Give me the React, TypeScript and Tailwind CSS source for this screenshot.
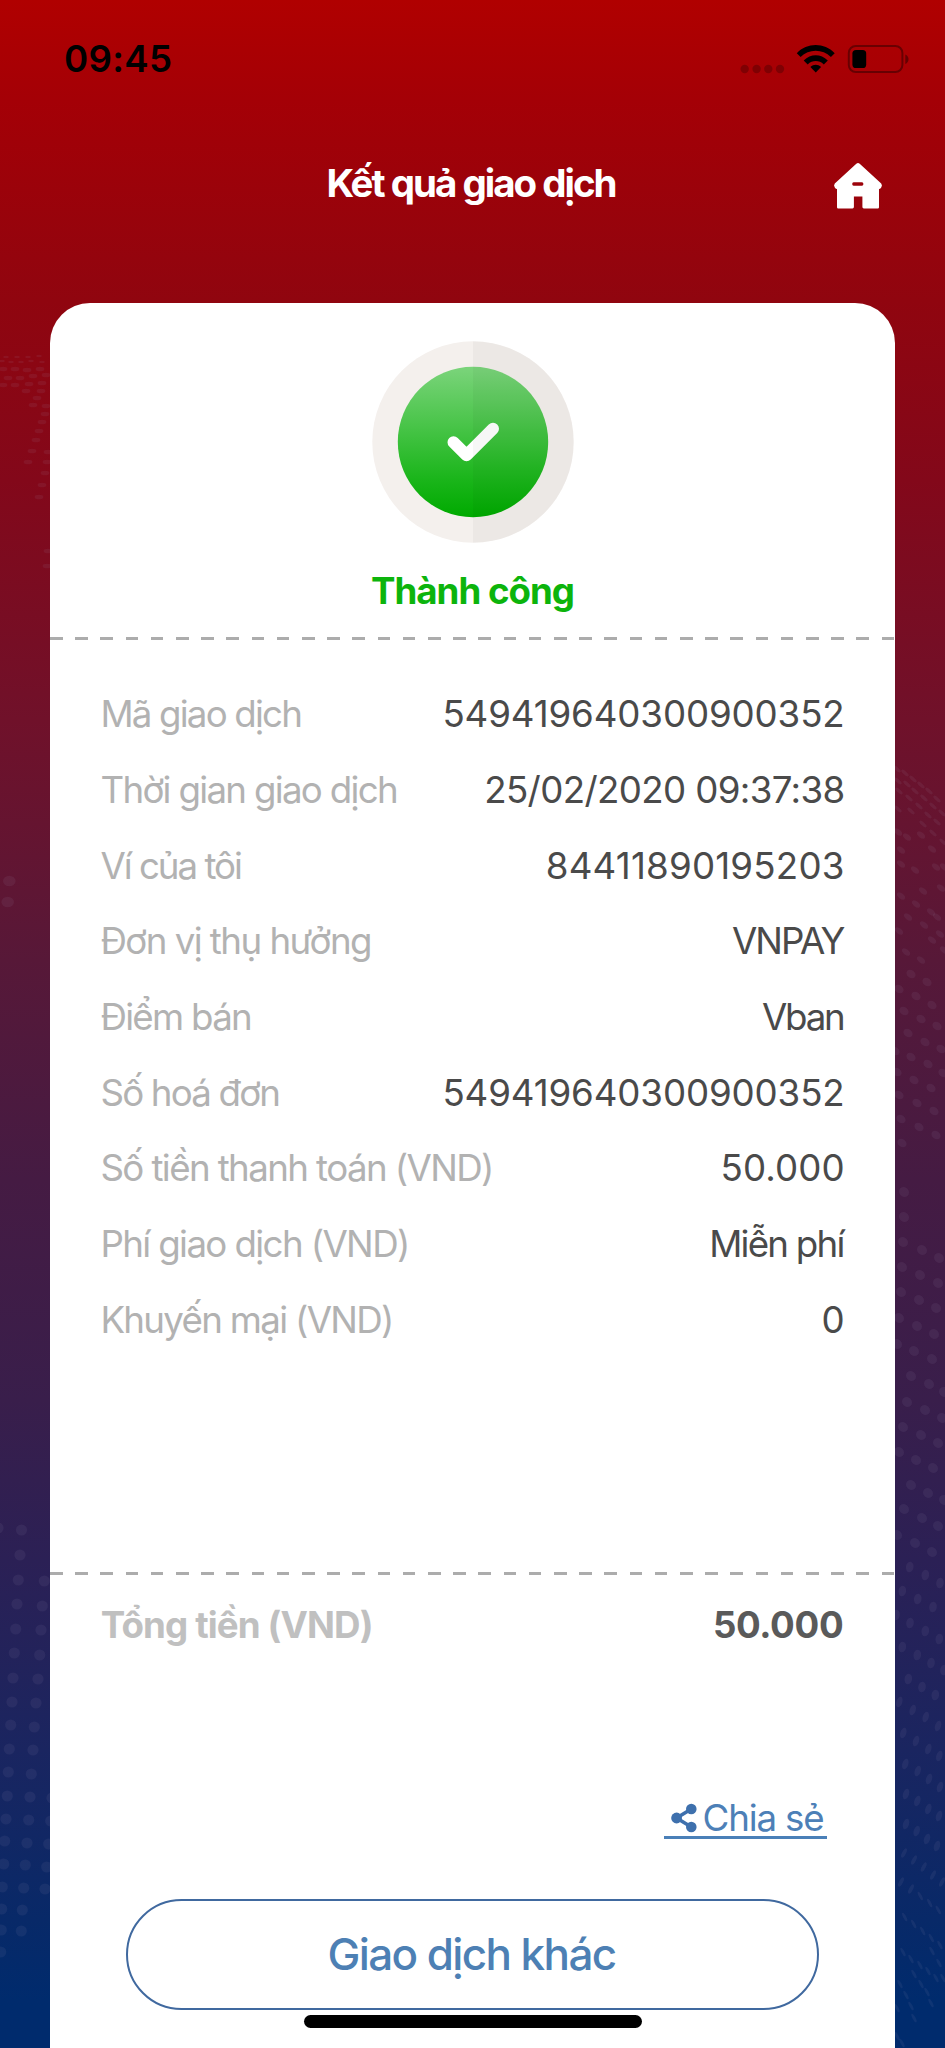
type Detail = {
  label: string;
  value: string;
  labelClass: string;
  valueClass: string;
};

const details: Detail[] = [
  { label: "Mã giao dịch", value: "549419640300900352", labelClass: "tracking-[-1.8px]", valueClass: "tracking-[-0.12px]" },
  { label: "Thời gian giao dịch", value: "25/02/2020 09:37:38", labelClass: "tracking-[-1.69px]", valueClass: "tracking-[-0.64px]" },
  { label: "Ví của tôi", value: "84411890195203", labelClass: "tracking-[-2px]", valueClass: "tracking-[0.2px]" },
  { label: "Đơn vị thụ hưởng", value: "VNPAY", labelClass: "tracking-[-1.53px]", valueClass: "mr-px tracking-[-1.9px]" },
  { label: "Điểm bán", value: "Vban", labelClass: "tracking-[-1.7px]", valueClass: "mr-px tracking-[-2.2px]" },
  { label: "Số hoá đơn", value: "549419640300900352", labelClass: "tracking-[-1.8px]", valueClass: "tracking-[-0.12px]" },
  { label: "Số tiền thanh toán (VND)", value: "50.000", labelClass: "tracking-[-1.6px]", valueClass: "tracking-[0.07px]" },
  { label: "Phí giao dịch (VND)", value: "Miễn phí", labelClass: "tracking-[-1.62px]", valueClass: "mr-px tracking-[-1.75px]" },
  { label: "Khuyến mại (VND)", value: "0", labelClass: "tracking-[-1.7px]", valueClass: "tracking-normal" },
];

// Background dots: [x, y] centres grouped by the size and tilt of the dot.
const dotGroups: { rx: number; ry: number; rot: number; pts: number[][] }[] = [
  {
    rx: 5.6, ry: 5.6, rot: 0,
    pts: [
      [-2, 1528], [21.5, 1530], [20, 1555], [18.3, 1580], [17, 1604], [15.7, 1629], [14.3, 1653], [13, 1678], [12, 1702],
      [10.7, 1725], [9.3, 1749], [8.3, 1772], [7.3, 1796], [6, 1819], [4.7, 1841], [3.7, 1864], [2.3, 1887], [1.7, 1909], [1.3, 1930], [0.7, 1952],
      [44.3, 1581], [42.3, 1606], [41, 1630], [39.7, 1655], [38, 1679], [36, 1703], [34.3, 1727], [33, 1750], [31.3, 1774],
      [30, 1797], [28.7, 1820], [27, 1843], [25.3, 1865], [23.7, 1888], [22.3, 1910], [21.3, 1931],
      [52, 1798], [50.7, 1821], [48.7, 1844], [46.7, 1867], [45, 1889],
    ],
  },
  { rx: 6.3, ry: 5.3, rot: 0, pts: [[9.3, 881], [7.7, 902]] },
  {
    rx: 4.4, ry: 2.3, rot: 0,
    pts: [
      [3, 369], [15, 369], [27, 370], [40, 369], [8, 378], [20, 378], [33, 376], [46, 375], [3, 385], [15, 385], [29, 384], [42, 383],
      [26, 391], [41, 391], [37, 398], [33, 405], [46, 406], [45, 414], [42, 422], [39, 431], [36, 440], [32, 451], [48, 452],
      [28, 462], [47, 462], [45, 473], [42, 485], [39, 497], [48, 551], [47, 566],
    ],
  },
  {
    rx: 2.8, ry: 1.2, rot: 0,
    pts: [[2, 361], [11, 362], [21, 362], [31, 361], [42, 362], [6, 357], [17, 357], [28, 357], [39, 356]],
  },
  {
    rx: 4.6, ry: 1.7, rot: 42,
    pts: [
      [897, 769], [905, 773], [913, 779], [921, 785], [929, 791], [937, 799], [898, 781], [907, 784], [915, 791], [924, 798], [933, 806], [942, 813],
      [899, 791], [909, 798], [919, 806], [928, 815], [937, 822], [898, 809], [911, 811], [923, 824], [933, 833], [943, 842],
    ],
  },
  {
    rx: 4.7, ry: 2.7, rot: 38,
    pts: [
      [898, 832], [907, 837], [921, 835], [932, 849], [901, 850], [901, 864], [915, 870], [923, 891], [931, 912], [936, 867], [944, 867], [941, 888],
      [901, 896], [916, 904], [908, 917], [924, 925], [937, 917], [899, 931], [906, 952], [921, 960], [932, 940], [940, 934], [944, 950],
    ],
  },
  {
    rx: 5, ry: 3.9, rot: 38,
    pts: [
      [911, 974], [927, 982], [899, 989], [916, 996], [932, 1005], [937, 1026], [904, 1011], [921, 1019], [908, 1033], [925, 1042], [941, 1049],
      [895, 1051], [911, 1057], [928, 1064], [943, 1073], [897, 1072], [914, 1080], [931, 1088], [899, 1095], [917, 1103], [934, 1111],
      [901, 1119], [919, 1127], [936, 1135], [902, 1143],
    ],
  },
  {
    rx: 4.8, ry: 5.3, rot: -40,
    pts: [
      [904, 1192], [904, 1217], [903, 1242], [902, 1267], [901, 1292], [899, 1318], [897, 1344], [922, 1250], [920, 1275], [919, 1300], [917, 1326],
      [914, 1351], [911, 1376], [907, 1402], [903, 1427], [899, 1452], [939, 1258], [938, 1283], [936, 1308], [934, 1334], [932, 1359], [929, 1384],
      [925, 1410], [921, 1435], [916, 1460], [911, 1485], [944, 1392], [942, 1418], [938, 1443], [933, 1468], [928, 1493], [944, 1500],
      [904, 1509], [922, 1518], [938, 1526], [897, 1535], [915, 1543], [932, 1552],
    ],
  },
  {
    rx: 3.8, ry: 5.4, rot: 10,
    pts: [
      [909.7, 1567], [925.3, 1575], [940, 1583], [902.3, 1591], [917.7, 1599], [933, 1607], [896, 1615], [910, 1623], [925.3, 1631], [939.3, 1639],
      [902.3, 1647], [917.3, 1655], [931, 1663], [944, 1670], [908.3, 1679], [922, 1687], [935.3, 1695],
    ],
  },
  {
    rx: 3, ry: 5.4, rot: 18,
    pts: [
      [899.3, 1702], [912.7, 1710], [925.7, 1717], [938, 1726], [903.3, 1733], [916, 1741], [928.3, 1749], [939.3, 1756], [905.3, 1764], [917.7, 1771],
      [929, 1779], [940, 1787], [906, 1794], [917.3, 1801], [928.3, 1809], [939, 1816], [906, 1824], [916.7, 1831], [927, 1839], [937, 1846],
    ],
  },
  {
    rx: 1.9, ry: 5.2, rot: 28,
    pts: [
      [904, 1853], [914, 1860], [923.7, 1867], [933, 1875], [942, 1882], [901, 1882], [911, 1889],
    ],
  },
  {
    rx: 1.5, ry: 4.8, rot: -28,
    pts: [
      [920.3, 1896], [929.7, 1903], [938.3, 1910], [904.7, 1917], [913.7, 1924], [922.7, 1931], [931.3, 1938], [940, 1945],
      [903, 1952], [911, 1959], [920, 1965], [928, 1971], [936, 1978],
      [932, 1951], [939, 1963], [943, 1978], [914, 1974], [921, 1984], [927, 1992], [931, 2003], [900, 1984], [906, 1995], [911, 2006], [914, 2018],
      [897, 2008], [897, 2036], [902, 2043],
    ],
  },
];

function BackgroundDots() {
  return (
    <svg className="pointer-events-none absolute inset-0" width="945" height="2048" viewBox="0 0 945 2048" aria-hidden="true">
      {dotGroups.map((g, i) => (
        <g key={i} fill="#a9a0c0" fillOpacity="0.09">
          {g.pts.map(([x, y], j) => (
            <ellipse key={j} cx={x} cy={y} rx={g.rx} ry={g.ry} transform={`rotate(${g.rot} ${x} ${y})`} />
          ))}
        </g>
      ))}
    </svg>
  );
}

function StatusIcons() {
  return (
    <svg width="170" height="32" viewBox="740 42 170 32" aria-hidden="true">
      <g fill="#000" fillOpacity="0.24">
        <circle cx="744.7" cy="68" r="4.2" />
        <circle cx="756.6" cy="68" r="4.2" />
        <circle cx="768.3" cy="68" r="4.2" />
        <circle cx="780" cy="68" r="4.2" />
      </g>
      <path d="M796.8 52.2C807 41.4 824.4 41.4 834.7 52.2L830.9 56C822.6 47.6 808.8 47.6 800.6 56Z" />
      <path d="M803.7 59.4C810.7 52.4 820.7 52.4 827.8 59.4L823.8 63.4C819 59 812.5 59 807.7 63.4Z" />
      <path d="M810.4 66C813.6 62.9 817.9 62.9 821.1 66L815.75 71.6Z" />
      <rect x="848.8" y="45" width="53.6" height="26" rx="7" fill="none" stroke="#000" strokeOpacity="0.38" strokeWidth="2" />
      <path d="M905.3 53.5C909.6 55 909.6 61.5 905.3 63Z" fillOpacity="0.4" />
      <rect x="852.4" y="49" width="13.8" height="18" rx="3.6" />
    </svg>
  );
}

function HomeIcon() {
  return (
    <svg width="50" height="50" viewBox="0 0 50 50" aria-hidden="true">
      <path
        fill="#fff"
        fillRule="evenodd"
        d="M23.3 2.7Q25 1.2 26.7 2.7L48.2 22.6Q49.7 24.6 48.2 26.4Q47.2 28 46 28V46.3Q46 47.5 44.8 47.5H30.8Q29.4 47.5 29.4 46.1V35.6H20.9V46.1Q20.9 47.5 19.5 47.5H5.2Q4 47.5 4 46.3V28Q2.8 28 1.8 26.4Q.3 24.6 1.8 22.6ZM20.6 21.3Q19.2 21.3 19.2 23T20.6 24.7H29Q30.4 24.7 30.4 23T29 21.3Z"
      />
    </svg>
  );
}

function SuccessBadge() {
  return (
    <svg className="mx-auto block" width="202" height="202" viewBox="-101 -101 202 202" aria-hidden="true">
      <defs>
        <linearGradient id="badge" x1="0" y1="0" x2="0" y2="1">
          <stop offset="0" stopColor="#7bd47b" />
          <stop offset="0.45" stopColor="#41c241" />
          <stop offset="0.75" stopColor="#1ab51a" />
          <stop offset="1" stopColor="#00aa00" />
        </linearGradient>
      </defs>
      <circle r="100.7" fill="#f4f0ed" />
      <circle r="75.2" fill="url(#badge)" />
      <path d="M-19.5 0.3L-6.5 13.2L20 -13.2" fill="none" stroke="#fff" strokeWidth="12" strokeLinecap="round" strokeLinejoin="round" />
      <path d="M0 -100.7A100.7 100.7 0 0 1 0 100.7Z" fill="#000" fillOpacity="0.03" />
    </svg>
  );
}

function ShareIcon() {
  return (
    <svg width="26" height="30" viewBox="0 0 26 30" fill="#3e70ad" aria-hidden="true">
      <path d="M20.3 6L5.6 15L20.3 24" fill="none" stroke="#3e70ad" strokeWidth="3.6" />
      <circle cx="20.3" cy="6" r="5.3" />
      <circle cx="5.6" cy="15" r="5.4" />
      <circle cx="20.3" cy="24" r="5.3" />
    </svg>
  );
}

function Divider() {
  return <div className="h-[3px] bg-[repeating-linear-gradient(90deg,#acacac_0_12.6px,transparent_12.6px_25.2px)]" />;
}

export default function App() {
  return (
    <div className="relative h-[2048px] w-[945px] overflow-hidden bg-[linear-gradient(180deg,#b00000_0px,#a40006_100px,#90050f_300px,#83081a_480px,#70112a_720px,#571838_960px,#451b43_1180px,#391e4b_1400px,#2b2055_1560px,#1a2560_1750px,#082968_1920px,#002b6d_2000px)] font-['Inter',sans-serif]">
      <BackgroundDots />
      <div className="relative flex flex-col">
        <div className="flex h-[117px] items-center justify-between pr-[35px] pl-16">
          <span className="text-[36.7px] font-semibold tracking-[0.3px] text-black">09:45</span>
          <StatusIcons />
        </div>

        <header className="grid h-[134px] grid-cols-[1fr_auto_1fr] items-center">
          <span />
          <h1 className="mr-[3px] text-[38.5px] font-bold tracking-[-2px] whitespace-nowrap text-white">Kết quả giao dịch</h1>
          <button className="mt-1 mr-[62px] justify-self-end">
            <HomeIcon />
          </button>
        </header>

        <main className="mx-auto mt-[51.5px] flex h-[1800px] w-[844.6px] flex-col rounded-t-[40px] bg-white pt-[38px]">
          <SuccessBadge />
          <p className="mt-[23.5px] mb-[20.5px] text-center text-[36.7px] leading-[50px] font-bold tracking-[-1px] text-[#0cb40c]">Thành công</p>
          <Divider />

          <dl className="mt-[36.7px] flex flex-col px-[50.2px] text-[36.7px]">
            {details.map((d) => (
              <div key={d.label} className="flex h-[75.66px] items-center justify-between whitespace-nowrap">
                <dt className={`text-[#b2b2b2] ${d.labelClass}`}>{d.label}</dt>
                <dd className={`text-[#4a4a4a] ${d.valueClass}`}>{d.value}</dd>
              </div>
            ))}
          </dl>

          <div className="mt-[215px]">
            <Divider />
          </div>
          <div className="mt-[19px] flex h-[60px] items-center justify-between px-[50.5px] text-[36.7px] font-bold">
            <span className="tracking-[-0.88px] text-[#c0c0c0]">Tổng tiền (VND)</span>
            <span className="mr-px tracking-[-0.35px] text-[#5a5a5a]">50.000</span>
          </div>

          <a className="mt-[146px] mr-[67.5px] flex h-[39px] w-[163.7px] items-center self-end border-b-[3px] border-[#4a80b8] pl-[7px] text-[36.7px] text-[#4d80b7]">
            <ShareIcon />
            <span className="ml-[6px] leading-9 tracking-[-1.16px] whitespace-nowrap">Chia sẻ</span>
          </a>

          <button className="mx-auto mt-[59.5px] flex h-[111px] w-[692.6px] items-center justify-center rounded-full border-2 border-[#40699f] pr-0.5 text-[44px] font-medium tracking-[-1.6px] text-[#4d80b4]">
            Giao dịch khác
          </button>
          <div className="mx-auto mt-[5px] h-[13px] w-[338px] shrink-0 rounded-full bg-black" />
        </main>
      </div>
    </div>
  );
}
